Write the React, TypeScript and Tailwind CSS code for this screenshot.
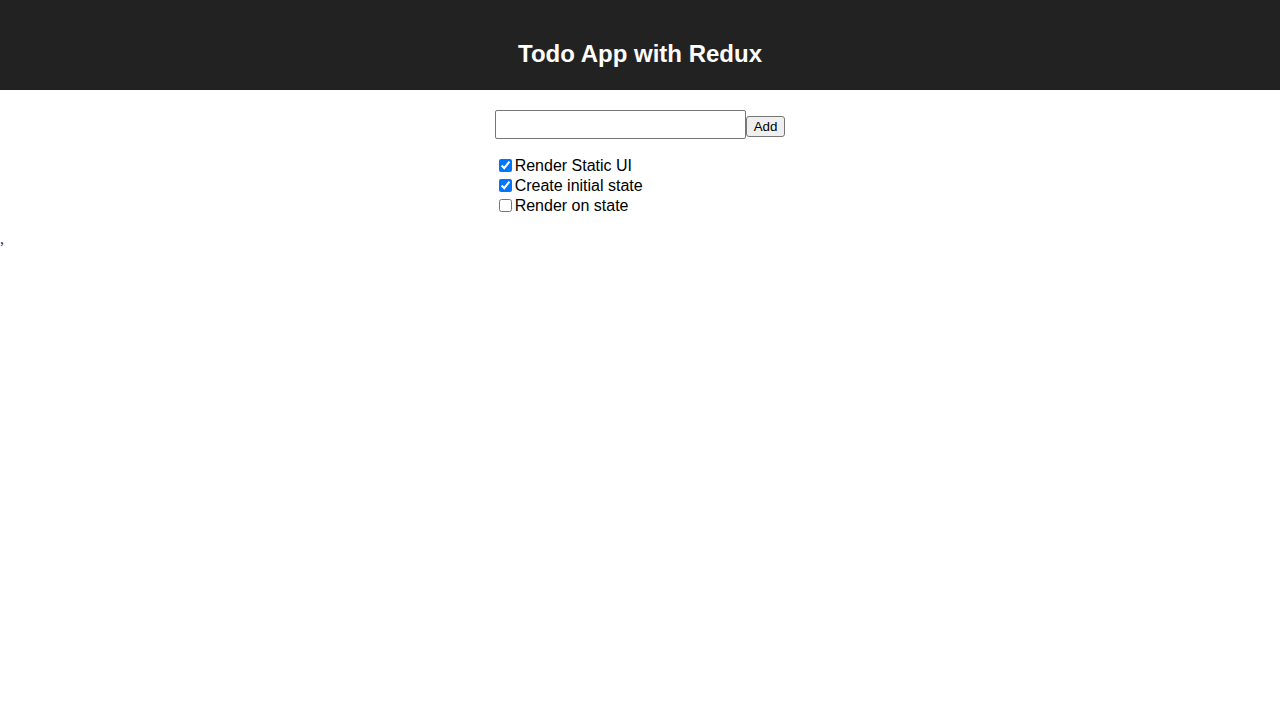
import React from "react";

export default function App() {
  const items = [
    { text: "Render Static UI", done: true },
    { text: "Create initial state", done: true },
    { text: "Render on state", done: false },
  ];
  return (
    <div className="min-h-[720px] bg-white" style={{ fontFamily: '"Liberation Serif", serif' }}>
      <div className="h-[90px] bg-[#222222] pt-[40px]">
        <h1 className="text-center text-[24px] leading-[27px] font-bold text-white" style={{ fontFamily: '"Liberation Sans", Arial, sans-serif' }}>
          Todo App with Redux
        </h1>
      </div>
      <div className="flex justify-center mt-[20px]" style={{ fontFamily: '"Liberation Sans", Arial, sans-serif' }}>
        <div className="flex flex-col">
          <div className="flex items-end">
            <input
              type="text"
              className="w-[251px] h-[29px] border border-[#767676] rounded-[2px] px-1 text-[16px] outline-none"
            />
            <button className="h-[21px] mb-[2px] px-[7px] border border-[#767676] rounded-[3px] bg-[#efefef] text-[13.33px] leading-[15px] text-black">
              Add
            </button>
          </div>
          <ul className="mt-[17px] text-[16px] leading-[20px] text-black">
            {items.map((it) => (
              <li key={it.text} className="flex items-start h-[20px]">
                <input type="checkbox" defaultChecked={it.done} className="mt-[3px] ml-[4px] mr-[3px] w-[13px] h-[13px]" />
                <span>{it.text}</span>
              </li>
            ))}
          </ul>
        </div>
      </div>
      <div className="mt-[14px] text-[16px] leading-[18px] text-[#333333]">,</div>
    </div>
  );
}
